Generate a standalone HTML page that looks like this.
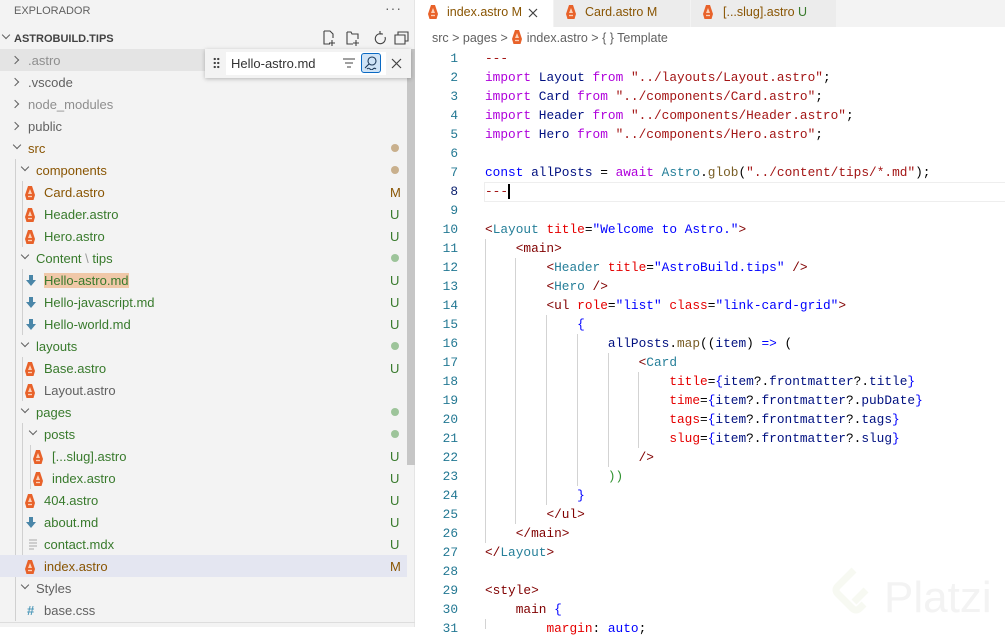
<!DOCTYPE html>
<html><head><meta charset="utf-8">
<style>
*{margin:0;padding:0;box-sizing:border-box}
body{width:1005px;height:627px;overflow:hidden;background:#fff;font-family:"Liberation Sans",sans-serif;position:relative}
#side{position:absolute;left:0;top:0;width:415px;height:627px;background:#f3f3f3;border-right:1px solid #e5e5e5}
.t{position:absolute;font-size:13px;color:#616161;white-space:nowrap;line-height:22px;padding-top:1px}
.row{position:absolute;left:0;width:407px;height:22px}
.chev{position:absolute;width:6px;height:6px;border-right:1.2px solid #616161;border-bottom:1.2px solid #616161}
.cr{transform:rotate(-45deg)}
.cd{transform:rotate(45deg)}
.g{color:#387a2c}
.m{color:#895503}
.badge{position:absolute;left:390px;font-size:13px;line-height:22px;padding-top:1px}
.dot{position:absolute;left:391px;width:8px;height:8px;border-radius:50%}
.guide{position:absolute;width:1px;background:#d0d0d0}
.ic{position:absolute}
#tabs{position:absolute;left:416px;top:0;width:589px;height:27px;background:#f3f3f3}
.tab{position:absolute;top:0;height:27px;font-size:12.5px;line-height:25px;white-space:nowrap}
#code{position:absolute;left:416px;top:49px;font-family:"Liberation Mono",monospace;font-size:12.8px}
.ln{position:absolute;left:0;width:42px;text-align:right;color:#237893;line-height:19px}
.cl{position:absolute;left:69px;white-space:pre;line-height:19px;color:#000}
.k{color:#af00db}.ty{color:#267f99}.s{color:#a31515}.tg{color:#800000}.at{color:#e50000}.av{color:#0000ff}.v{color:#001080}.f{color:#795e26}.b{color:#0000ff}.kb{color:#0000ff}
.ig{position:absolute;width:1px;background:#d3d3d3}
</style></head><body>
<div id="side">
<div class="t" style="left:14px;top:0;font-size:11px;line-height:20px;color:#616161">EXPLORADOR</div>
<div class="t" style="left:385px;top:-4px;font-size:14px;letter-spacing:1px">···</div>
<div class="chev cd" style="left:3px;top:32px"></div>
<div class="t" style="left:14px;top:27px;font-size:11px;font-weight:bold;color:#424242">ASTROBUILD.TIPS</div>
<svg class="ic" style="left:322px;top:30px" width="90" height="16" fill="none" stroke="#424242" stroke-width="1.1">
<path d="M2 1h6l3 3v4M2 1v13h6M10 10v6M7 13h6"/>
<path d="M25 2h4l1 2h6v5M25 2v12h6M34 10v6M31 13h6"/>
<path d="M60 4a5 5 0 1 0 3 3M58 1v3h3"/>
<path d="M73 5h10v9h-10zM76 5V2h10v9h-3"/>
</svg>
<div class="row" style="top:49px;background:#e4e4e4"></div>
<div class="chev cr" style="left:12px;top:57px"></div><div class="t" style="left:28px;top:49px;color:#8e8e8e">.astro</div>
<div class="chev cr" style="left:12px;top:79px"></div><div class="t" style="left:28px;top:71px">.vscode</div>
<div class="chev cr" style="left:12px;top:101px"></div><div class="t" style="left:28px;top:93px;color:#8e8e8e">node_modules</div>
<div class="chev cr" style="left:12px;top:123px"></div><div class="t" style="left:28px;top:115px">public</div>
<div class="chev cd" style="left:14px;top:142px"></div><div class="t m" style="left:28px;top:137px">src</div><div class="dot" style="top:144px;background:#c9b08d"></div>
<div class="guide" style="left:15px;top:159px;height:462px"></div>
<div class="chev cd" style="left:22px;top:164px"></div><div class="t m" style="left:36px;top:159px">components</div><div class="dot" style="top:166px;background:#c9b08d"></div>
<div class="guide" style="left:22px;top:181px;height:66px"></div>
<div class="t m" style="left:44px;top:181px">Card.astro</div><div class="badge m" style="top:181px">M</div>
<div class="t g" style="left:44px;top:203px">Header.astro</div><div class="badge g" style="top:203px">U</div>
<div class="t g" style="left:44px;top:225px">Hero.astro</div><div class="badge g" style="top:225px">U</div>
<div class="chev cd" style="left:22px;top:252px"></div><div class="t g" style="left:36px;top:247px">Content<span style="color:#999"> \ </span>tips</div><div class="dot" style="top:254px;background:#9dc49a"></div>
<div class="guide" style="left:22px;top:269px;height:66px"></div>
<div class="t g" style="left:44px;top:269px"><span style="background:#f0c8a8">Hello-astro.md</span></div><div class="badge g" style="top:269px">U</div>
<div class="t g" style="left:44px;top:291px">Hello-javascript.md</div><div class="badge g" style="top:291px">U</div>
<div class="t g" style="left:44px;top:313px">Hello-world.md</div><div class="badge g" style="top:313px">U</div>
<div class="chev cd" style="left:22px;top:340px"></div><div class="t g" style="left:36px;top:335px">layouts</div><div class="dot" style="top:342px;background:#9dc49a"></div>
<div class="guide" style="left:22px;top:357px;height:44px"></div>
<div class="t g" style="left:44px;top:357px">Base.astro</div><div class="badge g" style="top:357px">U</div>
<div class="t" style="left:44px;top:379px">Layout.astro</div>
<div class="chev cd" style="left:22px;top:406px"></div><div class="t g" style="left:36px;top:401px">pages</div><div class="dot" style="top:408px;background:#9dc49a"></div>
<div class="guide" style="left:22px;top:423px;height:154px"></div>
<div class="chev cd" style="left:30px;top:428px"></div><div class="t g" style="left:44px;top:423px">posts</div><div class="dot" style="top:430px;background:#9dc49a"></div>
<div class="guide" style="left:30px;top:445px;height:44px"></div>
<div class="t g" style="left:52px;top:445px">[...slug].astro</div><div class="badge g" style="top:445px">U</div>
<div class="t g" style="left:52px;top:467px">index.astro</div><div class="badge g" style="top:467px">U</div>
<div class="t g" style="left:44px;top:489px">404.astro</div><div class="badge g" style="top:489px">U</div>
<div class="t g" style="left:44px;top:511px">about.md</div><div class="badge g" style="top:511px">U</div>
<div class="t g" style="left:44px;top:533px">contact.mdx</div><div class="badge g" style="top:533px">U</div>
<div class="row" style="top:555px;background:#e4e6f1"></div>
<div class="t m" style="left:44px;top:555px">index.astro</div><div class="badge m" style="top:555px">M</div>
<div class="chev cd" style="left:22px;top:582px"></div><div class="t" style="left:36px;top:577px">Styles</div>
<div class="t" style="left:27px;top:599px;color:#519aba;font-weight:bold">#</div><div class="t" style="left:44px;top:599px">base.css</div>
<svg class="ic" style="left:0;top:0" width="60" height="627">
<defs><g id="a"><path d="M3 0h4l3 9-1.5 5h-7L0 9z" fill="#e8622a"/><path d="M5 3l2 5H3z" fill="#fbd1b8"/><path d="M3 10.5h4" stroke="#fbd1b8" stroke-width="1.3"/></g>
<g id="md"><path d="M2 0h4v5h3l-5 6-5-6h3z" fill="#4a86a8" transform="translate(1,1)"/></g></defs>
<use href="#a" x="25" y="186"/><use href="#a" x="25" y="208"/><use href="#a" x="25" y="230"/>
<use href="#md" x="26" y="274"/><use href="#md" x="26" y="296"/><use href="#md" x="26" y="318"/>
<use href="#a" x="25" y="362"/><use href="#a" x="25" y="384"/>
<use href="#a" x="33" y="450"/><use href="#a" x="33" y="472"/><use href="#a" x="25" y="494"/>
<use href="#md" x="26" y="516"/>
<path d="M29 540h8M29 543h8M29 546h8M29 549h5" stroke="#aaa" stroke-width="1"/>
<use href="#a" x="25" y="560"/>
</svg>
<div style="position:absolute;left:407px;top:49px;width:8px;height:416px;background:#c6c6c6"></div>
<div style="position:absolute;left:0;top:622px;width:415px;height:1px;background:#ddd"></div>
<div style="position:absolute;left:205px;top:49px;width:206px;height:29px;background:#f3f3f3;box-shadow:0 1px 4px rgba(0,0,0,.25)">
<div style="position:absolute;left:8px;top:8px;width:7px;height:12px;background:radial-gradient(circle,#424242 1px,transparent 1.3px) 0 0/3.5px 4px"></div>
<div style="position:absolute;left:21px;top:3px;width:160px;height:23px;background:#fff"></div>
<div class="t" style="left:26px;top:3px;color:#333">Hello-astro.md</div>
<svg style="position:absolute;left:137px;top:8px" width="14" height="12" stroke="#424242" stroke-width="1.1"><path d="M1 2h12M3 6h8M5 10h4"/></svg>
<div style="position:absolute;left:156px;top:4px;width:20px;height:20px;border:1px solid #0a69c3;background:#cfe3f6;border-radius:3px"></div>
<svg style="position:absolute;left:159px;top:7px" width="14" height="14" fill="none" stroke="#1e3a5a" stroke-width="1.1"><circle cx="8" cy="5" r="4"/><path d="M5 8L1 12M3 13q1.5-1.5 3 0t3 0 3 0"/></svg>
<svg style="position:absolute;left:186px;top:9px" width="11" height="11" stroke="#424242" stroke-width="1.2"><path d="M1 1l9 9M10 1l-9 9"/></svg>
</div>
</div>
<div id="tabs">
<div class="tab" style="left:0;width:138px;background:#fff"></div>
<div class="tab" style="left:138px;width:137px;background:#ececec"></div>
<div class="tab" style="left:275px;width:145px;background:#ececec"></div>
<div style="position:absolute;left:137px;top:0;width:1px;height:27px;background:#f3f3f3"></div>
<div style="position:absolute;left:274px;top:0;width:1px;height:27px;background:#f3f3f3"></div>
<svg class="ic" style="left:0;top:0" width="420" height="27"><use href="#a" x="12" y="5"/><use href="#a" x="150" y="5"/><use href="#a" x="287" y="5"/></svg>
<div class="tab m" style="left:31px">index.astro M</div>
<svg style="position:absolute;top:8px;left:112px" width="10" height="10" stroke="#424242" stroke-width="1.2"><path d="M1 1l8 8M9 1l-8 8"/></svg>
<div class="tab m" style="left:169px">Card.astro M</div>
<div class="tab m" style="left:307px">[...slug].astro <span class="g">U</span></div>
</div>
<div style="position:absolute;left:432px;top:29px;font-size:12.5px;line-height:19px;color:#616161;white-space:nowrap">src &gt; pages &gt; <svg width="12" height="14" style="vertical-align:-2px"><use href="#a" x="1" y="0"/></svg> index.astro &gt; { } Template</div>
<div style="position:absolute;left:484px;top:182px;width:521px;height:20px;border:1px solid #eee;border-right:none"></div>
<div id="code">
<div class="ig" style="left:69px;top:190px;height:304px"></div>
<div class="ig" style="left:99px;top:209px;height:266px"></div>
<div class="ig" style="left:130px;top:266px;height:190px"></div>
<div class="ig" style="left:161px;top:285px;height:152px"></div>
<div class="ig" style="left:192px;top:304px;height:114px"></div>
<div class="ig" style="left:222px;top:323px;height:76px"></div>
<div class="ig" style="left:69px;top:570px;height:10px"></div>
<div class="ln" style="top:0">1</div><div class="cl" style="top:0"><span class="s">---</span></div>
<div class="ln" style="top:19px">2</div><div class="cl" style="top:19px"><span class="k">import</span> <span class="v">Layout</span> <span class="k">from</span> <span class="s">"../layouts/Layout.astro"</span>;</div>
<div class="ln" style="top:38px">3</div><div class="cl" style="top:38px"><span class="k">import</span> <span class="v">Card</span> <span class="k">from</span> <span class="s">"../components/Card.astro"</span>;</div>
<div class="ln" style="top:57px">4</div><div class="cl" style="top:57px"><span class="k">import</span> <span class="v">Header</span> <span class="k">from</span> <span class="s">"../components/Header.astro"</span>;</div>
<div class="ln" style="top:76px">5</div><div class="cl" style="top:76px"><span class="k">import</span> <span class="v">Hero</span> <span class="k">from</span> <span class="s">"../components/Hero.astro"</span>;</div>
<div class="ln" style="top:95px">6</div>
<div class="ln" style="top:114px">7</div><div class="cl" style="top:114px"><span class="kb">const</span> <span class="v">allPosts</span> = <span class="k">await</span> <span class="ty">Astro</span>.<span class="f">glob</span>(<span class="s">"../content/tips/*.md"</span>);</div>
<div class="ln" style="top:133px;color:#0b216f">8</div><div class="cl" style="top:133px"><span class="s">---</span><span style="border-left:2px solid #000"></span></div>
<div class="ln" style="top:152px">9</div>
<div class="ln" style="top:171px">10</div><div class="cl" style="top:171px"><span class="tg">&lt;</span><span class="ty">Layout</span> <span class="at">title</span>=<span class="av">"Welcome to Astro."</span><span class="tg">&gt;</span></div>
<div class="ln" style="top:190px">11</div><div class="cl" style="top:190px">    <span class="tg">&lt;main&gt;</span></div>
<div class="ln" style="top:209px">12</div><div class="cl" style="top:209px">        <span class="tg">&lt;</span><span class="ty">Header</span> <span class="at">title</span>=<span class="av">"AstroBuild.tips"</span> <span class="tg">/&gt;</span></div>
<div class="ln" style="top:228px">13</div><div class="cl" style="top:228px">        <span class="tg">&lt;</span><span class="ty">Hero</span> <span class="tg">/&gt;</span></div>
<div class="ln" style="top:247px">14</div><div class="cl" style="top:247px">        <span class="tg">&lt;ul</span> <span class="at">role</span>=<span class="av">"list"</span> <span class="at">class</span>=<span class="av">"link-card-grid"</span><span class="tg">&gt;</span></div>
<div class="ln" style="top:266px">15</div><div class="cl" style="top:266px">            <span class="b">{</span></div>
<div class="ln" style="top:285px">16</div><div class="cl" style="top:285px">                <span class="v">allPosts</span>.<span class="f">map</span>((<span class="v">item</span>) <span class="kb">=&gt;</span> (</div>
<div class="ln" style="top:304px">17</div><div class="cl" style="top:304px">                    <span class="tg">&lt;</span><span class="ty">Card</span></div>
<div class="ln" style="top:323px">18</div><div class="cl" style="top:323px">                        <span class="at">title</span>=<span class="b">{</span><span class="v">item</span>?.<span class="v">frontmatter</span>?.<span class="v">title</span><span class="b">}</span></div>
<div class="ln" style="top:342px">19</div><div class="cl" style="top:342px">                        <span class="at">time</span>=<span class="b">{</span><span class="v">item</span>?.<span class="v">frontmatter</span>?.<span class="v">pubDate</span><span class="b">}</span></div>
<div class="ln" style="top:361px">20</div><div class="cl" style="top:361px">                        <span class="at">tags</span>=<span class="b">{</span><span class="v">item</span>?.<span class="v">frontmatter</span>?.<span class="v">tags</span><span class="b">}</span></div>
<div class="ln" style="top:380px">21</div><div class="cl" style="top:380px">                        <span class="at">slug</span>=<span class="b">{</span><span class="v">item</span>?.<span class="v">frontmatter</span>?.<span class="v">slug</span><span class="b">}</span></div>
<div class="ln" style="top:399px">22</div><div class="cl" style="top:399px">                    <span class="tg">/&gt;</span></div>
<div class="ln" style="top:418px">23</div><div class="cl" style="top:418px">                <span style="color:#319331">))</span></div>
<div class="ln" style="top:437px">24</div><div class="cl" style="top:437px">            <span class="b">}</span></div>
<div class="ln" style="top:456px">25</div><div class="cl" style="top:456px">        <span class="tg">&lt;/ul&gt;</span></div>
<div class="ln" style="top:475px">26</div><div class="cl" style="top:475px">    <span class="tg">&lt;/main&gt;</span></div>
<div class="ln" style="top:494px">27</div><div class="cl" style="top:494px"><span class="tg">&lt;/</span><span class="ty">Layout</span><span class="tg">&gt;</span></div>
<div class="ln" style="top:513px">28</div>
<div class="ln" style="top:532px">29</div><div class="cl" style="top:532px"><span class="tg">&lt;style&gt;</span></div>
<div class="ln" style="top:551px">30</div><div class="cl" style="top:551px">    <span class="tg">main</span> <span class="b">{</span></div>
<div class="ln" style="top:570px">31</div><div class="cl" style="top:570px">        <span class="at">margin</span>: <span class="av">auto</span>;</div>
</div>
<svg style="position:absolute;left:826px;top:562px" width="180" height="60">
<path d="M28 8L12 24q-4 4 0 8l14 14q4 4 8 0l4-4M40 28l-12 12" fill="none" stroke="#f7f9f2" stroke-width="7" stroke-linejoin="round"/>
<text x="58" y="50" font-family="Liberation Sans" font-size="44" fill="#f3f3f3">Platzi</text>
</svg>
</body></html>
